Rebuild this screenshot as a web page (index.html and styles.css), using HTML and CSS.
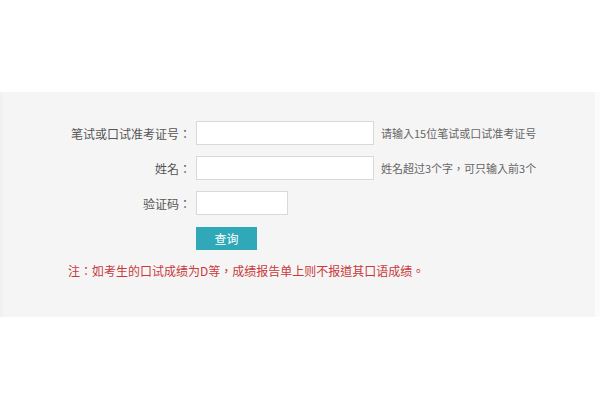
FILE: index.html
```html
<!DOCTYPE html>
<html lang="zh-TW">

<head>
    <meta charset="UTF-8">
    <meta name="viewport" content="width=device-width, initial-scale=1.0">
    <title>成绩查询</title>
    <link rel="stylesheet" href="styles.css">
</head>

<body>
    <div class="panel">
        <form class="query-form">
            <label class="label" for="zkz">笔试或口试准考证号：</label>
            <input class="field" id="zkz" type="text">
            <span class="hint">请输入15位笔试或口试准考证号</span>

            <label class="label" for="xm">姓名：</label>
            <input class="field" id="xm" type="text">
            <span class="hint">姓名超过3个字，可只输入前3个</span>

            <label class="label" for="yzm">验证码：</label>
            <input class="field short" id="yzm" type="text">
            <span></span>

            <span></span>
            <button class="btn" type="button">查询</button>
            <span></span>
        </form>
        <p class="note">注：如考生的口试成绩为D等，成绩报告单上则不报道其口语成绩。</p>
    </div>
</body>

</html>
```

FILE: styles.css
```css
* {
    margin: 0px;
    padding: 0px;
    box-sizing: border-box;
}

body {
    background-color: #fff;
    font-family: "Noto Sans CJK TC", "Noto Sans CJK SC", "Liberation Sans", sans-serif;
    font-size: 12px;
    color: #555;
    text-spacing-trim: space-all;
    font-feature-settings: "chws" 0, "halt" 0;
}

.panel {
    margin-top: 92px;
    height: 225px;
    background-color: #f5f5f5;
    border-left: 3px solid #f1f1f1;
    border-right: 5px solid #fbfbfb;
    padding-top: 29px;
}

.query-form {
    display: grid;
    grid-template-columns: 190px max-content 1fr;
    grid-auto-rows: 24px;
    column-gap: 3px;
    row-gap: 11px;
    align-items: center;
}

.label {
    text-align: right;
    padding-right: 2px;
}

.field {
    width: 178px;
    height: 24px;
    border: 1px solid #d9d9d9;
    background-color: #fff;
    outline: none;
}

.short {
    width: 92px;
}

.hint {
    font-size: 11px;
    color: #666;
    padding-left: 4px;
}

.btn {
    width: 61px;
    height: 23px;
    border: none;
    background-color: #2fa8b7;
    color: #fff;
    font-family: inherit;
    font-size: 12px;
}

.note {
    margin-top: 12px;
    padding-left: 65px;
    line-height: 18px;
    color: #c9393b;
}
```
